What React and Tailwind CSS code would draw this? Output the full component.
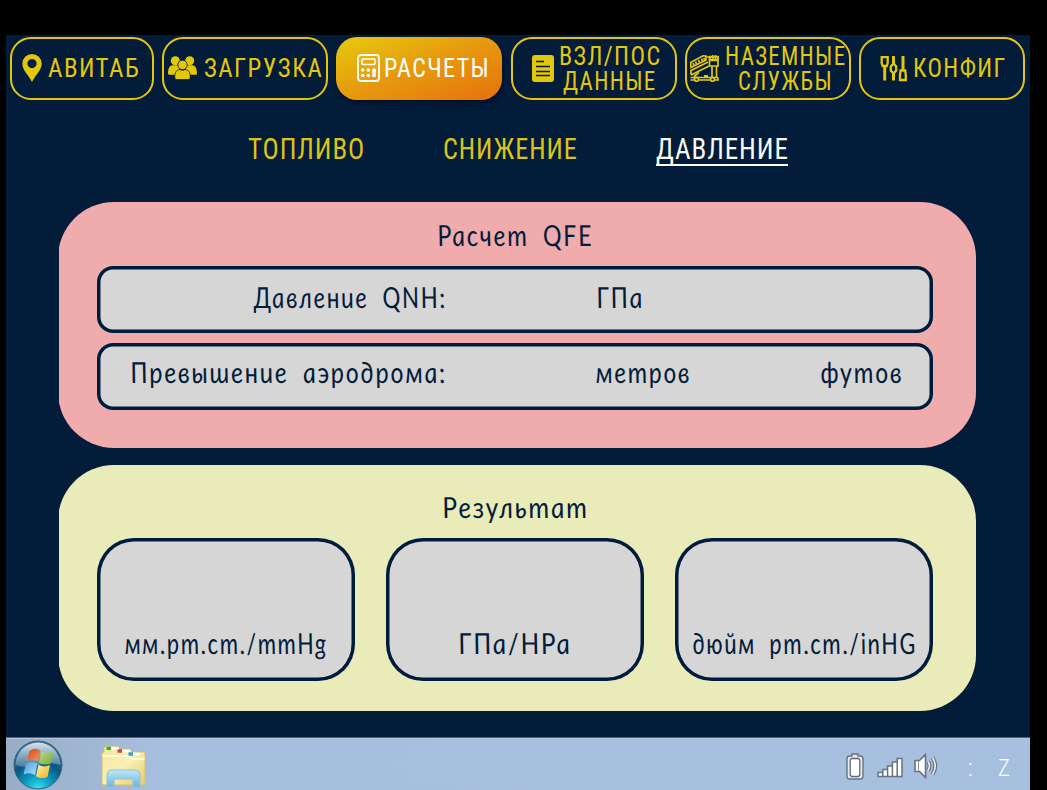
import { useLayoutEffect, useRef } from 'react';

/* Stretches one line of text horizontally so that it fills its box. */
function Fit({ className, textClass, skew = 0, children }) {
  const box = useRef(null);
  const text = useRef(null);
  useLayoutEffect(() => {
    const apply = () => {
      const spacing = parseFloat(getComputedStyle(text.current).letterSpacing) || 0;
      const scale = box.current.clientWidth / (text.current.offsetWidth - spacing);
      text.current.style.transform = `scaleX(${scale}) skewX(${skew}deg)`;
    };
    apply();
    document.fonts.ready.then(apply);
  }, [skew]);
  return (
    <span ref={box} className={`block shrink-0 whitespace-nowrap ${className}`}>
      <span ref={text} className={`inline-block ${textClass}`}>
        {children}
      </span>
    </span>
  );
}

function Caps({ className, children }) {
  return (
    <Fit
      className={`h-[25px] ${className}`}
      textClass="origin-left font-['Roboto',sans-serif] text-[26px] leading-[25px] tracking-[1.5px] [font-stretch:75%]"
    >
      {children}
    </Fit>
  );
}

/* Upright setting of Lato's italic, for its cursive Cyrillic letterforms. */
function Label({ className, children }) {
  return (
    <Fit
      className={`h-[30px] ${className}`}
      textClass="origin-[0_75%] font-['Lato',sans-serif] text-[29px] italic leading-[30px] tracking-[2px] [word-spacing:8px]"
      skew={8}
    >
      {children}
    </Fit>
  );
}

function NavButton({ className, children }) {
  return (
    <button
      type="button"
      className={`flex h-[63px] w-[166px] shrink-0 items-center rounded-[21px] border-2 border-[#e3c70f] text-[#e3c70f] ${className}`}
    >
      {children}
    </button>
  );
}

const PinIcon = () => (
  <svg className="h-[28px] w-[20px] shrink-0" viewBox="0 0 20 28" fill="currentColor">
    <path fillRule="evenodd" d="M10 0a9.7 9.7 0 0 1 9.7 9.7C19.7 16 13.5 21 10 28 6.500 21 .3 16 .3 9.700A9.700 9.700 0 0 1 10 0Zm0 5a4.600 4.600 0 1 0 0 9.200 4.600 4.600 0 0 0 0-9.200Z" />
  </svg>
);

const PeopleIcon = () => (
  <svg className="h-[24px] w-[29px] shrink-0" viewBox="0 0 29 24" fill="currentColor">
    <circle cx="7.300" cy="4.800" r="4.500" />
    <circle cx="21.700" cy="4.800" r="4.500" />
    <path d="M0 17.500C0 12 2 9.500 4.500 9.300h6.500L12 18.700H1.500Q0 18.700 0 17.500ZM29 17.500C29 12 27 9.500 24.500 9.300H18V18.700h9.500q1.500 0 1.500-1.200Z" />
    <g stroke="#031c3a" strokeWidth=".8">
      <circle cx="14.500" cy="8.900" r="4.700" />
      <path d="M6.800 22C6.500 16 8.500 14 11.500 13.600q3 1.200 6 0C20.500 14 22.500 16 22.200 22q-.2 1.600-2 1.600H8.800q-1.800 0-2-1.600Z" />
    </g>
  </svg>
);

const CalcIcon = () => (
  <svg className="h-[28px] w-[23px] shrink-0" viewBox="0 0 23 28" fill="none" stroke="currentColor">
    <rect x="1" y="1" width="21" height="26" rx="3" strokeWidth="1.800" />
    <rect x="5" y="5" width="13" height="5.500" rx="1" strokeWidth="1.500" />
    <g fill="currentColor" stroke="none">
      <circle cx="5.700" cy="16" r="1.800" />
      <circle cx="11.300" cy="16" r="1.800" />
      <circle cx="17" cy="16" r="1.800" />
      <circle cx="5.700" cy="21.500" r="1.800" />
      <circle cx="11.300" cy="21.500" r="1.800" />
      <rect x="15.200" y="15" width="3.500" height="8.300" rx="1.500" />
    </g>
  </svg>
);

const SheetIcon = () => (
  <svg className="h-[27px] w-[22px] shrink-0" viewBox="0 0 22 27" fill="none">
    <rect width="22" height="27" rx="3" fill="currentColor" />
    <path d="M4 6.500h8M4 11.500h14M4 16.500h14M4 20.500h14" stroke="#031c3a" strokeWidth="1.300" />
  </svg>
);

const StairsIcon = () => (
  <svg className="h-[28px] w-[29px] shrink-0" viewBox="0 0 29 28" fill="none" stroke="currentColor" strokeWidth="1.700">
    <path d="M.5 8.500 13 1.800l3 .2v4L1 13.500Z" />
    <path d="m3 9 1 2.500m1.500-4 1 2.500m2-4 1 2.500m2-4 1 2.500m1.500-3 .5 2" strokeWidth="1.800" />
    <path d="M19 12 1 21M18 8 1 16.500v4M17 3h11v9H19.500V2" />
    <path d="M20 2.500h8v3h-8ZM20 6.500h8M22.800 1v4M25.500 1v4" strokeWidth="1.500" />
    <path d="M22 12v11M26.500 12v11M9 18.500l-5 4M.5 23.500H28M.5 26H4m5 0h11m5 0h3v-2.500" />
    <path d="M14 22h4" strokeWidth="2" />
    <circle cx="6.500" cy="25.300" r="2" />
    <circle cx="22.500" cy="25.300" r="2" />
  </svg>
);

const SlidersIcon = () => (
  <svg className="h-[27px] w-[27px] shrink-0" viewBox="0 0 27 27" fill="none" stroke="currentColor" strokeWidth="2.300">
    <path d="M4.700 11v14.500M13.500 1v8M13.500 18v7.500M23 1v15" strokeWidth="3" />
    <path d="M1.700 2.200h6V8L6.700 11h-4l-1-3V2.200Z" />
    <path d="m13.500 8.500 2.700 3v4l-2.700 3-2.700-3v-4Z" />
    <path d="M20.600 15.500h4.600l.6 4.500v5h-5.800v-5Z" />
  </svg>
);

const StartOrb = () => (
  <svg className="h-[50px] w-[50px] shrink-0" viewBox="0 0 50 50">
    <defs>
      <radialGradient id="orb" cx=".5" cy="1" r=".95">
        <stop offset="0" stopColor="#35e3f3" />
        <stop offset=".3" stopColor="#0b9cc4" />
        <stop offset=".6" stopColor="#0c5683" />
        <stop offset="1" stopColor="#3c6f8f" />
      </radialGradient>
      <linearGradient id="gloss" x1="0" y1="0" x2="0" y2="1">
        <stop offset="0" stopColor="#dfeaf0" stopOpacity=".95" />
        <stop offset="1" stopColor="#8fb0c2" stopOpacity=".45" />
      </linearGradient>
      <linearGradient id="red" x1="0" y1="0" x2="1" y2="1">
        <stop offset="0" stopColor="#d9421c" />
        <stop offset="1" stopColor="#f39a5c" />
      </linearGradient>
      <linearGradient id="green" x1="0" y1="0" x2="1" y2="1">
        <stop offset="0" stopColor="#c3dc8a" />
        <stop offset="1" stopColor="#6fae2e" />
      </linearGradient>
      <linearGradient id="blue" x1="0" y1="0" x2="1" y2="1">
        <stop offset="0" stopColor="#3f9ee0" />
        <stop offset="1" stopColor="#b5e0f7" />
      </linearGradient>
      <linearGradient id="amber" x1="0" y1="0" x2="1" y2="1">
        <stop offset="0" stopColor="#fff0a8" />
        <stop offset="1" stopColor="#f6b11b" />
      </linearGradient>
    </defs>
    <circle cx="25" cy="25" r="24" fill="url(#orb)" stroke="#39637e" strokeWidth="1" />
    <path d="M2.500 25a22.500 22.500 0 0 1 45 0Q36 21 25 25T2.500 25Z" fill="url(#gloss)" />
    <path d="M16.500 11q5.500-4 11-.5L25 21.500q-5.500-3-11-.2Z" fill="url(#red)" />
    <path d="M28.500 11.500q5.500 3 12-.3L38 23.500q-6 2.500-12-.8Z" fill="url(#green)" />
    <path d="M13 23.500q5.500-3 11.500 0L22 35q-5-3-11.500-.5Z" fill="url(#blue)" />
    <path d="M25.500 24.800q5.500 3 11.500.3L34.500 37q-6 2.500-11.500-.8Z" fill="url(#amber)" />
  </svg>
);

const FolderIcon = () => (
  <svg className="h-[45px] w-[46px] shrink-0" viewBox="0 0 46 45">
    <defs>
      <linearGradient id="folder" x1="0" y1="0" x2="1" y2="1">
        <stop offset="0" stopColor="#f5e7a0" />
        <stop offset=".5" stopColor="#f9efb6" />
        <stop offset="1" stopColor="#e6cb68" />
      </linearGradient>
      <linearGradient id="stand" x1="0" y1="0" x2="0" y2="1">
        <stop offset="0" stopColor="#bfe6f6" />
        <stop offset="1" stopColor="#6bb5dc" />
      </linearGradient>
    </defs>
    <path d="M3 3 5 1h11l2 3h11l2 3h11q2 0 2 2v29q0 2-2 2H3q-2 0-2-2V8l2-1Z" fill="url(#folder)" stroke="#d8bf67" strokeWidth="1" />
    <path d="M1.500 11H28l3 3h12.500" fill="none" stroke="#fdf8d5" strokeWidth="2" />
    <path d="M10 3.500h8M21 6h8M31 9h8" stroke="#fff" strokeWidth="2.600" />
    <path d="M5.500 3.300h4.500" stroke="#2bb42e" strokeWidth="3.500" />
    <path d="M16.500 6h4.500" stroke="#d04a22" strokeWidth="3.500" />
    <path d="M27.500 9h4.500" stroke="#3a9bd0" strokeWidth="3.500" />
    <path d="M6 42V30q0-5 5-5h23q5 0 5 5v12h-7v-8H13v8Z" fill="url(#stand)" stroke="#8cc3df" strokeWidth="1" />
  </svg>
);

const BatteryIcon = () => (
  <svg className="h-[27px] w-[18px] shrink-0" viewBox="0 0 18 27">
    <path d="M6 1h6v2h2.500q2.500 0 2.500 3V23q0 3-2.500 3h-11Q1 26 1 23V6q0-3 2.500-3H6Z" fill="#e9edf2" stroke="#68727f" strokeWidth="1.400" />
    <path d="M5.500 5.500h7l1.300 1.500v15l-1.300 1.500h-7l-1.300-1.500V7Z" fill="#fff" stroke="#5f6a77" strokeWidth="1.300" />
  </svg>
);

const SignalIcon = () => (
  <svg className="h-[21px] w-[26px] shrink-0" viewBox="0 0 26 21" fill="#fff" stroke="#68727f" strokeWidth="1.500">
    <path d="M1 15.500h4.800v4H1ZM5.800 12.500h4.800v7H5.800ZM10.600 9h4.800V19.500h-4.800ZM15.400 5h4.800V19.500h-4.800ZM20.200 1.500H25V19.500h-4.800Z" />
  </svg>
);

const SpeakerIcon = () => (
  <svg className="h-[26px] w-[25px] shrink-0" viewBox="0 0 25 26" fill="none">
    <path d="M1 7.500h4.500L11.500 1.500V24.500L5.500 18.500H1Z" fill="#fff" stroke="#68727f" strokeWidth="1.600" />
    <path d="M4.500 8v10" stroke="#8b95a1" />
    <path d="M14 8.500q3 4.500 0 9M18.500 4.500q5.500 8.500 0 17" stroke="#68727f" strokeWidth="4" />
    <path d="M14 8.500q3 4.500 0 9M18.500 4.500q5.500 8.500 0 17" stroke="#eef1f5" strokeWidth="1.600" />
  </svg>
);

function Panel({ className, children }) {
  return (
    <section className="h-[246px] w-[917px] overflow-hidden">
      <div className={`-ml-[1.300px] flex h-full w-[918.300px] flex-col rounded-[56px] pl-[39.300px] text-[#031c3a] ${className}`}>
        {children}
      </div>
    </section>
  );
}

function Field({ className, children }) {
  return (
    <div className={`flex h-[66.500px] w-[836px] shrink-0 rounded-2xl bg-[#d6d6d6] inset-ring-[3.5px] inset-ring-[#001c3d] ${className}`}>
      {children}
    </div>
  );
}

function Result({ children }) {
  return (
    <div className="flex h-[143.500px] w-[258px] shrink-0 justify-center rounded-[37px] bg-[#d6d6d6] pt-[90px] inset-ring-[3.5px] inset-ring-[#001c3d]">
      {children}
    </div>
  );
}

export default function App() {
  return (
    <div className="h-[790px] w-[1047px] overflow-hidden bg-black pl-[6px] pt-[35px]">
      <div className="flex h-[755px] w-[1024px] flex-col bg-[#031c3a]">
        <nav className="flex gap-[8.200px] pl-1 pt-[1.500px]">
          <NavButton className="max-w-[144px] gap-[6px] pl-[10px]">
            <PinIcon />
            <Caps className="w-[91px]">АВИТАБ</Caps>
          </NavButton>
          <NavButton className="gap-[7px] pl-1">
            <PeopleIcon />
            <Caps className="w-[118px]">ЗАГРУЗКА</Caps>
          </NavButton>
          <NavButton className="gap-[4px] border-transparent bg-linear-to-br from-[#e6cb0e] via-[#e69c0e] via-45% to-[#e5700d] bg-origin-border pl-[19px] text-white shadow-[2px_3px_4px_#00102a]">
            <CalcIcon />
            <Caps className="w-[105px]">РАСЧЕТЫ</Caps>
          </NavButton>
          <NavButton className="gap-[5px] pl-[19px]">
            <SheetIcon />
            <span className="flex flex-col items-center pt-[2px]">
              <Caps className="w-[101px]">ВЗЛ/ПОС</Caps>
              <Caps className="w-[92px]">ДАННЫЕ</Caps>
            </span>
          </NavButton>
          <NavButton className="gap-[6px] pl-[3px]">
            <StairsIcon />
            <span className="flex flex-col items-center pt-[2px]">
              <Caps className="w-[120px]">НАЗЕМНЫЕ</Caps>
              <Caps className="w-[94px]">СЛУЖБЫ</Caps>
            </span>
          </NavButton>
          <NavButton className="gap-[6px] pl-[19px]">
            <SlidersIcon />
            <Caps className="w-[92px]">КОНФИГ</Caps>
          </NavButton>
        </nav>

        <div className="mt-[34px] flex h-[34px] pl-[242px] text-[#dcc414]">
          <Fit className="mr-[79px] w-[116px]" textClass="origin-left font-['Roboto',sans-serif] text-[29.500px] leading-[31px] tracking-[1px] [font-stretch:75%]">
            ТОПЛИВО
          </Fit>
          <Fit className="mr-[79px] w-[134px]" textClass="origin-left font-['Roboto',sans-serif] text-[29.500px] leading-[31px] tracking-[1px] [font-stretch:75%]">
            СНИЖЕНИЕ
          </Fit>
          <Fit className="h-[32px] w-[132px] border-b-2 border-white text-[#fbfaf0]" textClass="origin-left font-['Roboto',sans-serif] text-[29.500px] leading-[31px] tracking-[1px] [font-stretch:75%]">
            ДАВЛЕНИЕ
          </Fit>
        </div>

        <main className="mt-[35px] flex flex-col gap-[17px] pl-[53px]">
          <Panel className="bg-[#f0abac] pt-[18px]">
            <div className="mb-[16px] flex w-[836px] justify-center">
              <Label className="w-[154px]">Расчет QFE</Label>
            </div>
            <Field className="mb-[10.500px] pl-[157px] pt-[16px]">
              <Label className="mr-[151px] w-[192px]">Давление QNH:</Label>
              <Label className="w-[46px]">ГПа</Label>
            </Field>
            <Field className="pl-[34px] pt-[14px]">
              <Label className="mr-[150px] w-[315px]">Превышение аэродрома:</Label>
              <Label className="mr-[131px] w-[94px]">метров</Label>
              <Label className="w-[81px]">футов</Label>
            </Field>
          </Panel>
          <Panel className="bg-[#e9ecb8] pt-[27px]">
            <div className="mb-[15.500px] flex w-[836px] justify-center">
              <Label className="w-[144px]">Результат</Label>
            </div>
            <div className="flex gap-[31px]">
              <Result>
                <Label className="w-[202px]">мм.рт.ст./mmHg</Label>
              </Result>
              <Result>
                <Label className="w-[112px]">ГПа/HPa</Label>
              </Result>
              <Result>
                <Label className="w-[223px]">дюйм рт.ст./inHG</Label>
              </Result>
            </div>
          </Panel>
        </main>

        <footer className="mt-[26px] flex h-[53px] shrink-0 items-start border-t border-[#506680] bg-linear-to-r from-[#98adc5] via-[#a7bfdf] via-15% to-[#a8c0e0] pl-[7px] shadow-[inset_0_1px_0_#b4c4d8]">
          <div className="pt-[2px]"><StartOrb /></div>
          <div className="ml-[38px] pt-[7px]"><FolderIcon /></div>
          <div className="ml-[699px] flex gap-[11px] pt-[15px]">
            <BatteryIcon />
            <div className="ml-[2px] pt-[4px]"><SignalIcon /></div>
            <SpeakerIcon />
          </div>
          <div className="ml-[29px] flex gap-[25px] pt-[18px] font-['Roboto',sans-serif] text-[23px] font-light leading-[25px] text-white">
            <span className="w-[5px]">:</span>
            <Fit className="w-[12px]" textClass="origin-left">Z</Fit>
          </div>
        </footer>
      </div>
    </div>
  );
}
